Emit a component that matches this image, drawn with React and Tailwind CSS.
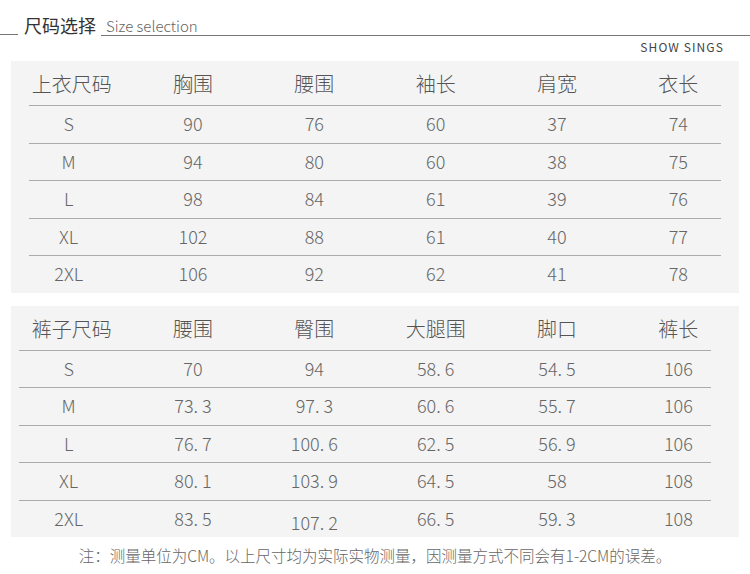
const tops = {
  head: ['上衣尺码', '胸围', '腰围', '袖长', '肩宽', '衣长'],
  rows: [
    ['S', '90', '76', '60', '37', '74'],
    ['M', '94', '80', '60', '38', '75'],
    ['L', '98', '84', '61', '39', '76'],
    ['XL', '102', '88', '61', '40', '77'],
    ['2XL', '106', '92', '62', '41', '78'],
  ],
}

const pants = {
  head: ['裤子尺码', '腰围', '臀围', '大腿围', '脚口', '裤长'],
  rows: [
    ['S', '70', '94', '58. 6', '54. 5', '106'],
    ['M', '73. 3', '97. 3', '60. 6', '55. 7', '106'],
    ['L', '76. 7', '100. 6', '62. 5', '56. 9', '106'],
    ['XL', '80. 1', '103. 9', '64. 5', '58', '108'],
    ['2XL', '83. 5', '107. 2', '66. 5', '59. 3', '108'],
  ],
}

function SizeTable({ data, lineClass }) {
  return (
    <div className="mx-[11px] bg-[#f4f4f4]">
      <div className="grid grid-cols-6 h-[44px] items-center pt-[2px] text-[20px] text-[#555]">
        {data.head.map((h, i) => (
          <div key={i} className="text-center">{h}</div>
        ))}
      </div>
      {data.rows.map((r, i) => (
        <div key={i}>
          <div className={`h-px bg-[#ababab] ${lineClass}`} />
          <div className="grid grid-cols-6 h-[36.5px] items-center pb-[1px] text-[18px] text-[#666]">
            {r.map((c, j) => (
              <div key={j} className={`text-center ${j === 0 ? 'pr-[6px]' : ''} ${c === '107. 2' ? 'pt-[8px]' : ''}`}>{c}</div>
            ))}
          </div>
        </div>
      ))}
    </div>
  )
}

export default function App() {
  return (
    <div className="w-[750px] h-[574px] bg-white overflow-hidden font-light" style={{ fontFamily: '"Noto Sans CJK SC", "Noto Sans", sans-serif' }}>
      {/* title bar */}
      <div className="flex items-end pt-[14px]">
        <div className="w-[18px] border-b border-[#777] mb-[1px]" />
        <div className="ml-[6px] text-[18px] leading-[22px] text-[#333] font-normal">尺码选择</div>
        <div className="flex-1 ml-[5px] border-b border-[#777] pl-[5px] text-[15px] leading-[19px] text-[#666]">Size selection</div>
      </div>
      <div className="flex justify-end pr-[26px] pt-[2px] h-[25px]">
        <span className="text-[12px] tracking-[1.1px] text-[#444] font-normal leading-[17px]">SHOW SINGS</span>
      </div>

      <SizeTable data={tops} lineClass="mx-[18px]" />
      <div className="h-[13px]" />
      <SizeTable data={pants} lineClass="ml-[8px] mr-[28px]" />

      <div className="text-center text-[15.5px] text-[#666] pt-[7px]">
        注：测量单位为CM。以上尺寸均为实际实物测量，因测量方式不同会有1-2CM的误差。
      </div>
    </div>
  )
}
